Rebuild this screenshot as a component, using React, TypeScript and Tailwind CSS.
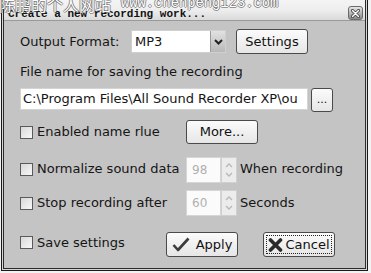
import React from "react";

const font = { fontFamily: '"DejaVu Sans", Verdana, sans-serif' };

function Checkbox() {
  return (
    <div className="w-[13px] h-[13px] border border-[#5a5a5a] bg-gradient-to-br from-[#d8d8d8] to-[#f8f8f8] shrink-0" />
  );
}

function Btn({ className = "", children }: { className?: string; children: React.ReactNode }) {
  return (
    <div
      className={
        "flex items-center justify-center rounded-[3px] border border-[#4a4a4a] bg-gradient-to-b from-[#fbfbfb] to-[#e6e6e6] text-[#111] shrink-0 " +
        className
      }
    >
      {children}
    </div>
  );
}

function Spin({ value }: { value: string }) {
  return (
    <div className="flex h-[26px] shrink-0">
      <div className="w-[35px] h-full bg-[#fbfbfb] border border-[#d6d6d6] flex items-center pl-[5px] text-[#b0b0b0] text-[12px]">
        {value}
      </div>
      <div className="w-[16px] h-full bg-[#ececec] border border-[#d0d0d0] flex flex-col items-center justify-center gap-[4px]">
        <svg width="8" height="5" viewBox="0 0 8 5">
          <path d="M1 4 L4 1 L7 4" stroke="#b8b8b8" strokeWidth="1.3" fill="none" />
        </svg>
        <svg width="8" height="5" viewBox="0 0 8 5">
          <path d="M1 1 L4 4 L7 1" stroke="#b8b8b8" strokeWidth="1.3" fill="none" />
        </svg>
      </div>
    </div>
  );
}

export default function App() {
  return (
    <div className="w-[371px] h-[273px] bg-[#f2f2f2] overflow-hidden relative" style={font}>
      <div className="ml-[1px] w-[367px] h-[271px] border-x border-b border-[#1a1a1a] bg-[#d6d6d6] px-[1px] pb-[1px]">
        <div className="h-full border-x border-b border-[#2a2a2a] bg-[#c4c4c4] flex flex-col">
          {/* title bar */}
          <div className="h-[21px] shrink-0 bg-gradient-to-b from-[#f4f4f4] via-[#eeeeee] to-[#dadada] border-b border-[#9a9a9a] flex items-end justify-between pl-[4px] pr-[2px]">
            <div
              className="text-[11px] leading-[12px] font-bold text-[#111] pb-0"
              style={{ fontFamily: '"Liberation Mono", "Courier New", monospace' }}
            >
              Create a new recording work...
            </div>
            <div className="w-[15px] h-[14px] rounded-[3px] border border-[#6a6a6a] bg-gradient-to-b from-[#e6e6e6] to-[#8a8a8a] flex items-center justify-center">
              <svg width="9" height="9" viewBox="0 0 9 9">
                <path d="M1.5 1.5 L7.5 7.5 M7.5 1.5 L1.5 7.5" stroke="#333" strokeWidth="3" strokeLinecap="round" />
                <path d="M1.5 1.5 L7.5 7.5 M7.5 1.5 L1.5 7.5" stroke="#fff" strokeWidth="1.5" strokeLinecap="round" />
              </svg>
            </div>
          </div>

          <div className="pl-[16px] text-[13px] text-[#151515] leading-[16px] flex flex-col">
            {/* row 1 */}
            <div className="mt-[8px] h-[25px] flex items-center">
              <div className="w-[111px]">Output Format:</div>
              <div className="w-[95px] h-[23px] bg-white border border-[#cfcfcf] flex items-center justify-between">
                <span className="pl-[3px]">MP3</span>
                <div className="w-[15px] h-[21px] bg-gradient-to-b from-[#e2e2e2] to-[#b8b8b8] border-l border-[#9a9a9a] flex items-center justify-center">
                  <svg width="9" height="6" viewBox="0 0 9 6">
                    <path d="M1 1 L4.5 4.5 L8 1" stroke="#222" strokeWidth="2" fill="none" />
                  </svg>
                </div>
              </div>
              <Btn className="ml-[10px] w-[72px] h-[25px]">Settings</Btn>
            </div>

            {/* label */}
            <div className="mt-[10px] h-[16px]">File name for saving the recording</div>

            {/* path */}
            <div className="mt-[8px] h-[24px] flex items-start">
              <div className="w-[288px] h-[22px] bg-white border border-[#d4d4d4] flex items-center overflow-hidden whitespace-nowrap pl-[2px]">
                <span>C:\Program Files\All Sound Recorder XP\ou</span>
              </div>
              <Btn className="ml-[3px] w-[22px] h-[24px] text-[11px]">...</Btn>
            </div>

            {/* enabled name rule */}
            <div className="mt-[8px] h-[24px] flex items-center">
              <div className="w-[166px] flex items-center gap-[4px]">
                <Checkbox />
                <span>Enabled name rlue</span>
              </div>
              <Btn className="w-[72px] h-[24px]">More...</Btn>
            </div>

            {/* normalize */}
            <div className="mt-[13px] h-[26px] flex items-center">
              <div className="w-[166px] flex items-center gap-[4px] mb-[2px]">
                <Checkbox />
                <span>Normalize sound data</span>
              </div>
              <Spin value="98" />
              <span className="ml-[3px] mb-[2px]">When recording</span>
            </div>

            {/* stop */}
            <div className="mt-[7px] h-[26px] flex items-center">
              <div className="w-[166px] flex items-center gap-[4px]">
                <Checkbox />
                <span>Stop recording after</span>
              </div>
              <Spin value="60" />
              <span className="ml-[3px]">Seconds</span>
            </div>

            {/* bottom */}
            <div className="mt-[16px] h-[25px] flex items-center">
              <div className="w-[146px] flex items-center gap-[4px] mb-[4px]">
                <Checkbox />
                <span>Save settings</span>
              </div>
              <Btn className="w-[72px] h-[25px] gap-[6px]">
                <svg width="18" height="15" viewBox="0 0 18 15">
                  <path d="M1.5 8 L6 13 L16.5 1.5" stroke="#3c3c3c" strokeWidth="2.6" fill="none" strokeLinejoin="round" />
                </svg>
                <span>Apply</span>
              </Btn>
              <Btn className="ml-[25px] w-[72px] h-[25px] p-[2px]">
                <div className="w-full h-full border border-dotted border-[#222] flex items-center justify-center gap-[2px]">
                  <svg width="15" height="14" viewBox="0 0 15 14">
                    <path d="M2.5 2 L12.5 12 M12.5 2 L2.5 12" stroke="#2a2a2a" strokeWidth="3.6" strokeLinecap="round" />
                  </svg>
                  <span>Cancel</span>
                </div>
              </Btn>
            </div>
          </div>
        </div>
      </div>

      {/* watermark */}
      <div
        className="absolute left-[-1px] top-[-5px] flex items-end whitespace-nowrap text-white pointer-events-none"
        style={{
          textShadow:
            "1px 0 0 rgba(70,70,70,0.55), -1px 0 0 rgba(70,70,70,0.55), 0 1px 0 rgba(70,70,70,0.55), 0 -1px 0 rgba(70,70,70,0.55)",
        }}
      >
        <span className="text-[16px] leading-[18px]" style={{ fontFamily: '"Noto Sans CJK SC", sans-serif' }}>
          陈鹏的个人网站
        </span>
        <span
          className="ml-[10px] text-[13.8px] leading-[18px]"
          style={{ fontFamily: '"Liberation Mono", "Courier New", monospace' }}
        >
          www.chenpeng123.com
        </span>
      </div>
    </div>
  );
}
